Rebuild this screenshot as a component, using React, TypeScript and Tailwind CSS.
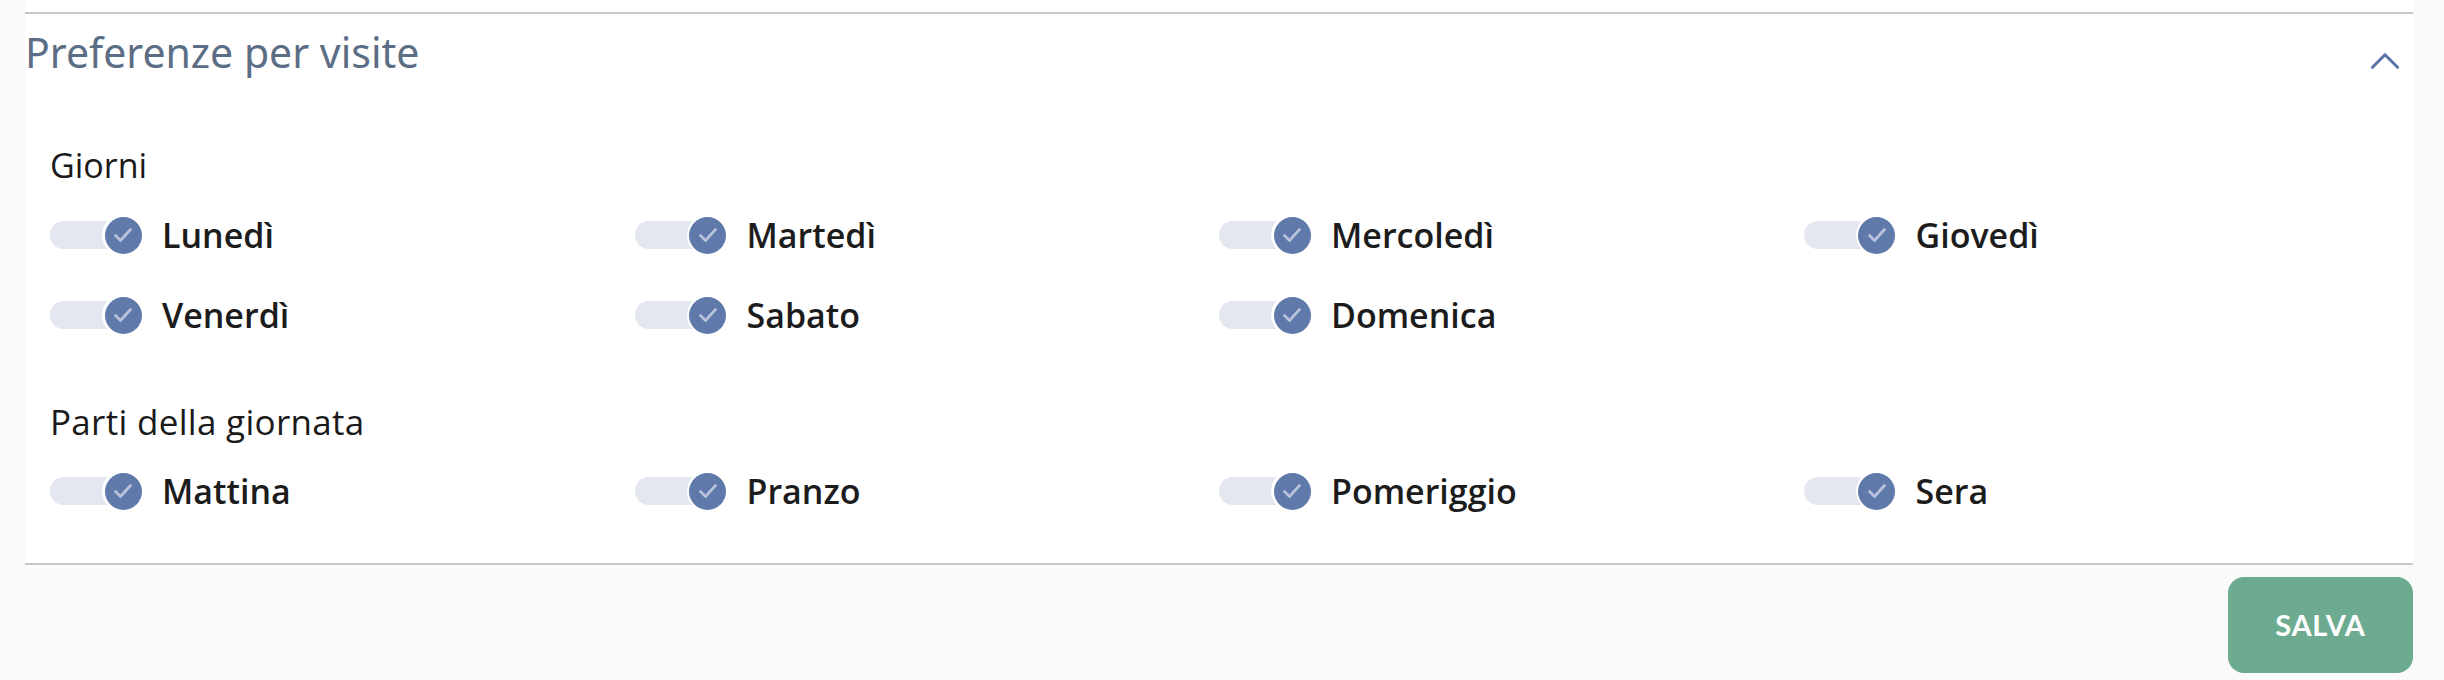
import { ChevronUp } from "lucide-react";

const days = ["Lunedì", "Martedì", "Mercoledì", "Giovedì", "Venerdì", "Sabato", "Domenica"];
const parts = ["Mattina", "Pranzo", "Pomeriggio", "Sera"];

function Toggle({ label }: { label: string }) {
  return (
    <div className="flex h-[56px] items-center">
      <div className="relative h-[42px] w-[94px] shrink-0">
        <div className="absolute left-0 top-[7px] h-[28px] w-[70px] rounded-full bg-[#e4e7f0]" />
        <div className="absolute left-[52px] top-0 flex h-[42px] w-[42px] items-center justify-center rounded-full bg-white">
          <div className="flex h-[37px] w-[37px] items-center justify-center rounded-full bg-[#6079ab]">
            <svg width="24" height="24" viewBox="0 0 24 24" fill="none">
              <path d="M4.5 12.5 L9.5 17.5 L19.5 6.5" stroke="#b8c2db" strokeWidth="2.8" strokeLinecap="round" strokeLinejoin="round" />
            </svg>
          </div>
        </div>
      </div>
      <span className="ml-[18px] font-['Open_Sans',sans-serif] text-[34px] font-semibold text-[#1c1c1c]">{label}</span>
    </div>
  );
}

export default function App() {
  return (
    <div className="min-h-[680px] bg-[#fafafa] pl-[25px] pr-[31px]">
      <div className="bg-white">
        <div className="h-[12px]" />
        <div className="h-[2px] bg-[#c5c9ce]" />
        <div className="flex h-[78px] items-center justify-between pr-[3px]">
          <h2 className="font-['Noto_Sans',sans-serif] text-[41px] text-[#5b6e85]">Preferenze per visite</h2>
          <ChevronUp className="mt-[16px] h-[50px] w-[50px] text-[#5a76a8]" strokeWidth={1.5} />
        </div>
        <div className="px-[25px] pb-[44px] pt-[53px]">
          <div className="h-[40px] font-['Open_Sans',sans-serif] text-[34px] leading-[40px] text-[#1a1a1a]">Giorni</div>
          <div className="mt-[22px] grid grid-cols-4 gap-y-[24px]">
            {days.map((d) => (
              <Toggle key={d} label={d} />
            ))}
          </div>
          <div className="mt-[59px] h-[40px] font-['Open_Sans',sans-serif] text-[35px] tracking-[0.3px] leading-[40px] text-[#1a1a1a]">Parti della giornata</div>
          <div className="mt-[21px] grid grid-cols-4">
            {parts.map((p) => (
              <Toggle key={p} label={p} />
            ))}
          </div>
        </div>
        <div className="h-[2px] bg-[#c5c9ce]" />
      </div>
      <div className="flex justify-end pt-[12px]">
        <button className="flex h-[96px] w-[185px] items-center justify-center rounded-[16px] bg-[#6dab90] font-['Lato',sans-serif] text-[29px] font-bold tracking-wide text-white">
          SALVA
        </button>
      </div>
    </div>
  );
}
